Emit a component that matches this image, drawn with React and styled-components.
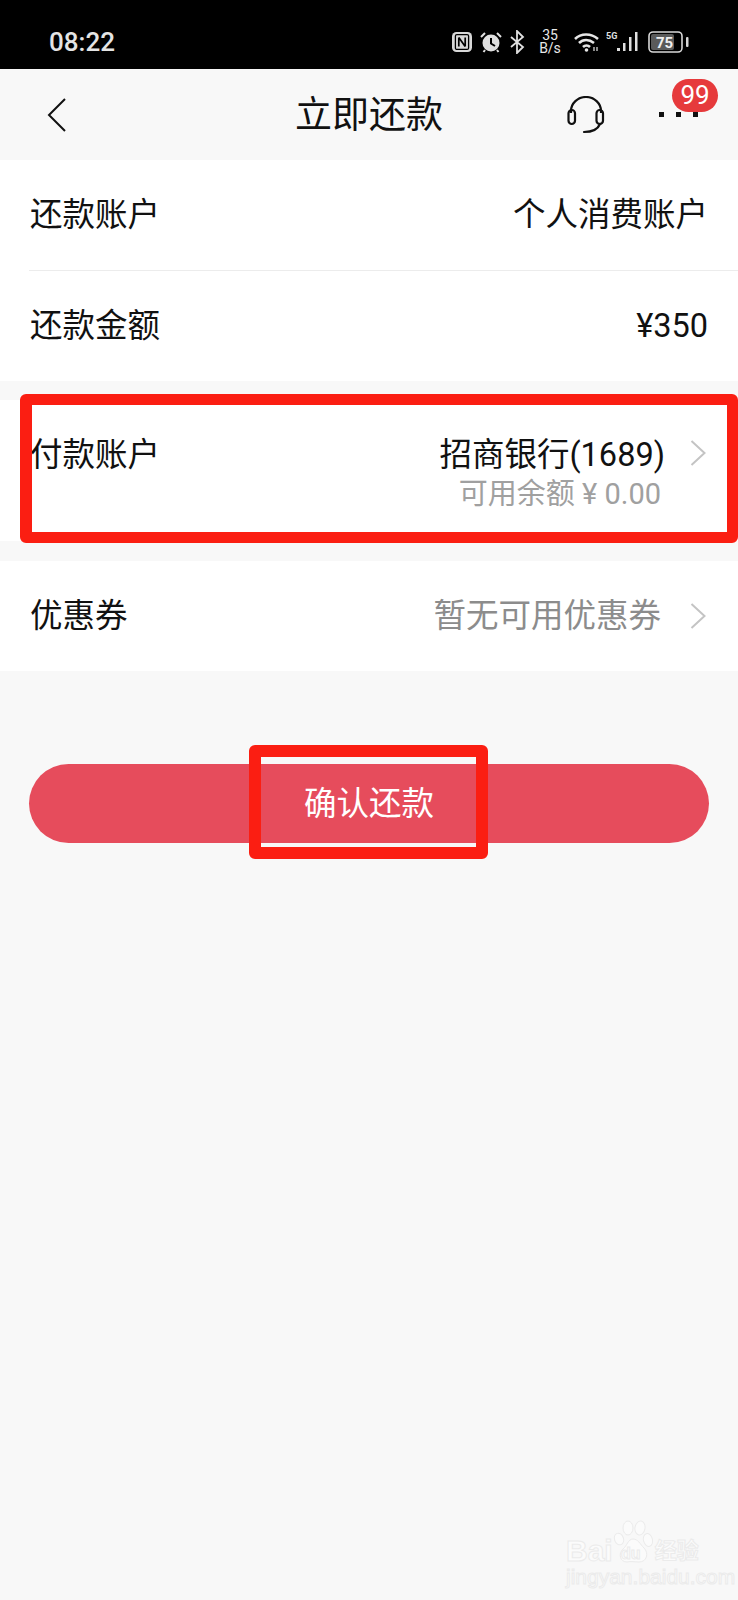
import React from "react";
import styled, { createGlobalStyle } from "styled-components";

const GlobalStyle = createGlobalStyle`
  html, body {
    margin: 0;
    padding: 0;
    background: #f8f8f8;
  }
  * {
    box-sizing: border-box;
  }
`;

const Page = styled.div`
  position: relative;
  width: 738px;
  height: 1600px;
  overflow: hidden;
  background: #f8f8f8;
  color: #111;
  font-family: Roboto, "Noto Sans CJK SC", sans-serif;
`;

const StatusBar = styled.div`
  display: flex;
  align-items: center;
  height: 69px;
  padding: 14px 48px 0 49px;
  background: #000;
`;

const Clock = styled.span`
  margin-right: auto;
  font-size: 26px;
  font-weight: 500;
  color: #e4e4e4;
`;

const StatusSlot = styled.span`
  display: flex;
  margin-left: ${(p) => p.$gap}px;
`;

const Speed = styled.span`
  display: flex;
  flex-direction: column;
  align-items: center;
  width: 24px;
  margin-left: 13px;
  font-size: 14px;
  line-height: 13px;
  color: #e8e8e8;
`;

const NavBar = styled.div`
  display: grid;
  grid-template-columns: 1fr auto 1fr;
  align-items: center;
  height: 91px;
  padding: 0 40px;
`;

const BackSlot = styled.div`
  display: flex;
  padding-left: 7px;
`;

const Title = styled.div`
  font-size: 37px;
  line-height: 44px;
  margin-top: 2px;
`;

const NavActions = styled.div`
  display: flex;
  align-items: center;
  justify-content: flex-end;
  gap: 54px;
`;

const MoreButton = styled.div`
  position: relative;
  display: flex;
  gap: 12px;
`;

const Dot = styled.span`
  width: 5px;
  height: 5px;
  background: #111;
`;

const Badge = styled.span`
  position: absolute;
  left: 13px;
  top: -33px;
  width: 46px;
  height: 33px;
  border-radius: 17px;
  background: #e63a3c;
  color: #fff;
  font-size: 26px;
  line-height: 33px;
  text-align: center;
`;

const Section = styled.div`
  background: #fff;
  margin-top: ${(p) => p.$gap || 0}px;
`;

const Row = styled.div`
  display: flex;
  justify-content: space-between;
  align-items: center;
  height: 110px;
  padding: 0 30px;
  font-size: 32.5px;
  line-height: 36px;
`;

const PaymentRow = styled(Row)`
  align-items: flex-start;
  height: 141px;
  padding-top: 37px;
`;

const Divider = styled.div`
  height: 1px;
  margin-left: 29px;
  background: #ececec;
`;

const RowEnd = styled.div`
  display: flex;
  align-items: ${(p) => p.$top ? "flex-start" : "center"};
`;

const Value = styled.span`
  color: ${(p) => p.$muted ? "#8c8c8c" : "#111"};
`;

const ValueStack = styled.div`
  display: flex;
  flex-direction: column;
  align-items: flex-end;
`;

const SubValue = styled.span`
  margin-top: 4px;
  margin-right: 4px;
  font-size: 29px;
  line-height: 34px;
  color: #a0a0a0;
`;

const ChevronSlot = styled.span`
  display: flex;
  margin-top: ${(p) => p.$top || 0}px;
  margin-left: ${(p) => p.$gap}px;
  margin-right: 2px;
`;

const PayButton = styled.div`
  display: flex;
  align-items: center;
  justify-content: center;
  height: 79px;
  margin: 93px 29px 0;
  border-radius: 40px;
  background: #e64c5c;
  color: #fff;
  font-size: 32.5px;
  line-height: 36px;
`;

const Highlight = styled.div`
  position: absolute;
  left: ${(p) => p.$left}px;
  top: ${(p) => p.$top}px;
  width: ${(p) => p.$width}px;
  height: ${(p) => p.$height}px;
  border-style: solid;
  border-color: #fb1e12;
  border-width: ${(p) => p.$border};
  border-radius: 6px;
`;

const Watermark = styled.div`
  position: absolute;
  left: 566px;
  top: 1520px;
  width: 134px;
  color: #fbfbfb;
  -webkit-text-stroke: 1px #ebebeb;
  font-family: "Liberation Sans", "Noto Sans CJK SC", sans-serif;
`;

const MarkTop = styled.div`
  display: flex;
  align-items: flex-end;
  height: 44px;
`;

const MarkWord = styled.span`
  font-size: ${(p) => p.$size}px;
  font-weight: 700;
  line-height: 26px;
`;

const MarkUrl = styled.div`
  margin-top: 3px;
  font-size: 21px;
  line-height: 20px;
  white-space: nowrap;
`;

const Chevron = () => (
  <svg width="16" height="26" viewBox="0 0 16 26" fill="none" stroke="#c4c4c4" strokeWidth="2">
    <path d="M1.5 1 L14.5 13 L1.5 25" />
  </svg>
);

const BackIcon = () => (
  <svg width="20" height="36" viewBox="0 0 20 36" fill="none" stroke="#111" strokeWidth="2">
    <path d="M18 2 L2 18 L18 34" />
  </svg>
);

const HeadsetIcon = () => (
  <svg width="38" height="38" viewBox="0 0 38 38" fill="none" stroke="#111" strokeWidth="2.2">
    <path d="M4 17 V15 A15 14 0 0 1 34 15 V17" />
    <rect x="1.5" y="14" width="6.5" height="14" rx="3.2" />
    <rect x="29.5" y="14" width="6.5" height="14" rx="3.2" />
    <path d="M33 28 C31 33 27 36 17 36" strokeLinecap="round" />
  </svg>
);

const NfcIcon = () => (
  <svg width="20" height="20" viewBox="0 0 20 20" fill="none">
    <rect width="20" height="20" rx="4.5" fill="#d8d8d8" />
    <rect x="3.4" y="2.6" width="13.2" height="14.8" rx="1.5" stroke="#000" strokeWidth="1.3" />
    <path d="M6.8 5.5 V14.5 M13.2 5.5 V14.5 M6.8 5.5 L13.2 14.5" stroke="#000" strokeWidth="1.7" />
  </svg>
);

const AlarmIcon = () => (
  <svg width="22" height="22" viewBox="0 0 22 22">
    <circle cx="11" cy="12" r="8.5" fill="#e0e0e0" />
    <path d="M11 7 V12.5 L15 15" stroke="#000" strokeWidth="2" fill="none" />
    <path d="M1 6 L5 2 M21 6 L17 2 M5 19 L3.5 21 M17 19 L18.5 21" stroke="#e0e0e0" strokeWidth="2" fill="none" />
  </svg>
);

const BluetoothIcon = () => (
  <svg width="15" height="24" viewBox="0 0 15 24" fill="none" stroke="#e0e0e0" strokeWidth="1.8">
    <path d="M1 7 L13 17 L7 23 V1 L13 7 L1 17" />
  </svg>
);

const WifiIcon = () => (
  <svg width="26" height="20" viewBox="0 0 26 20" fill="none" stroke="#e6e6e6" strokeWidth="2.6">
    <path d="M1 7 C7 1 17 1 24 7" />
    <path d="M5 11 C9 7 15 7 20 11" />
    <path d="M9 15 C11 13 14 13 16 15" />
    <circle cx="12.5" cy="18" r="1.8" fill="#e6e6e6" stroke="none" />
    <path d="M20 15 V19 M23 15 V19" strokeWidth="1.2" />
  </svg>
);

const SignalIcon = () => (
  <svg width="34" height="22" viewBox="0 0 34 22" fill="#e0e0e0">
    <text x="0" y="8" fontSize="9" fontWeight="700" fontFamily="Roboto, sans-serif">5G</text>
    <rect x="11" y="17" width="3" height="3" />
    <rect x="17" y="12" width="2.5" height="8" />
    <rect x="23" y="6" width="2.5" height="14" />
    <rect x="29" y="1" width="2.5" height="19" />
  </svg>
);

const BatteryIcon = () => (
  <svg width="42" height="22" viewBox="0 0 42 22">
    <rect x="1" y="1" width="33" height="20" rx="4" fill="none" stroke="#d8d8d8" strokeWidth="1.6" />
    <rect x="3" y="3" width="23" height="16" rx="2" fill="#5a5a5a" />
    <rect x="38" y="6" width="2.5" height="10" rx="1" fill="#d8d8d8" />
    <text x="8" y="16.5" fontSize="15" fontWeight="700" fontFamily="Roboto, sans-serif" fill="#f0f0f0">75</text>
  </svg>
);

const PawIcon = () => (
  <svg width="42" height="44" viewBox="0 0 42 44" fill="#fbfbfb" stroke="#ebebeb" strokeWidth="1">
    <ellipse cx="6" cy="19" rx="4.5" ry="6" transform="rotate(-20 6 19)" />
    <ellipse cx="15" cy="8" rx="5" ry="7" />
    <ellipse cx="27" cy="8" rx="5" ry="7" transform="rotate(10 27 8)" />
    <ellipse cx="35" cy="20" rx="4.5" ry="6.5" transform="rotate(-15 35 20)" />
    <path d="M20 19 C25 19 27 24 31 28 C36 33 34 42 26 42 C22 42 18 41 14 42 C7 42 5 34 10 29 C14 26 15 19 20 19 Z" />
    <text x="8" y="39" fontSize="16" fontWeight="700" fontFamily="Liberation Sans, sans-serif">du</text>
  </svg>
);

const App = () => {
  return (
    <Page>
      <GlobalStyle />
      <StatusBar>
        <Clock>08:22</Clock>
        <StatusSlot $gap={0}><NfcIcon /></StatusSlot>
        <StatusSlot $gap={8}><AlarmIcon /></StatusSlot>
        <StatusSlot $gap={8}><BluetoothIcon /></StatusSlot>
        <Speed>
          <span>35</span>
          <span>B/s</span>
        </Speed>
        <StatusSlot $gap={12}><WifiIcon /></StatusSlot>
        <StatusSlot $gap={6}><SignalIcon /></StatusSlot>
        <StatusSlot $gap={8}><BatteryIcon /></StatusSlot>
      </StatusBar>

      <NavBar>
        <BackSlot><BackIcon /></BackSlot>
        <Title>立即还款</Title>
        <NavActions>
          <HeadsetIcon />
          <MoreButton>
            <Dot />
            <Dot />
            <Dot />
            <Badge>99</Badge>
          </MoreButton>
        </NavActions>
      </NavBar>

      <Section>
        <Row>
          <span>还款账户</span>
          <Value>个人消费账户</Value>
        </Row>
        <Divider />
        <Row>
          <span>还款金额</span>
          <Value>¥350</Value>
        </Row>
      </Section>

      <Section $gap={19}>
        <PaymentRow>
          <Value>付款账户</Value>
          <RowEnd $top>
            <ValueStack>
              <Value>招商银行(1689)</Value>
              <SubValue>可用余额 ¥ 0.00</SubValue>
            </ValueStack>
            <ChevronSlot $gap={25} $top={3}><Chevron /></ChevronSlot>
          </RowEnd>
        </PaymentRow>
      </Section>

      <Section $gap={20}>
        <Row>
          <span>优惠券</span>
          <RowEnd>
            <Value $muted>暂无可用优惠券</Value>
            <ChevronSlot $gap={29}><Chevron /></ChevronSlot>
          </RowEnd>
        </Row>
      </Section>

      <PayButton>确认还款</PayButton>

      <Highlight $left={20} $top={394} $width={718} $height={149} $border="11px 11px 11px 12px" />
      <Highlight $left={249} $top={745} $width={239} $height={114} $border="12px" />

      <Watermark>
        <MarkTop>
          <MarkWord $size={30}>Bai</MarkWord>
          <PawIcon />
          <MarkWord $size={22}>经验</MarkWord>
        </MarkTop>
        <MarkUrl>jingyan.baidu.com</MarkUrl>
      </Watermark>
    </Page>
  );
};

export default App;
